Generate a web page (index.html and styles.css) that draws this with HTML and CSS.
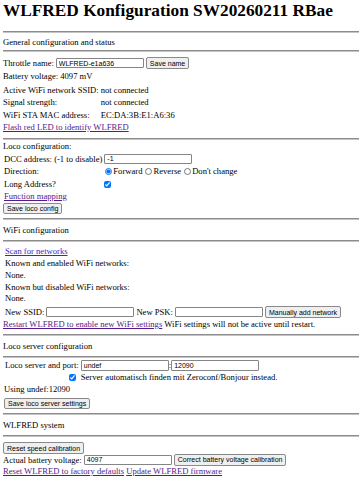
FILE: index.html
```html
<!DOCTYPE html>
<html lang="en">
<head>
    <meta charset="UTF-8">
    <meta name="viewport" content="width=device-width, initial-scale=1.0">
    <title>WLFRED Konfiguration</title>
    <link rel="stylesheet" href="styles.css">
</head>
<body>
    <h1>WLFRED Konfiguration SW20260211 RBae</h1>

    <hr>
    <div class="section-title first">General configuration and status</div>
    <hr>
    <form class="row throttle-row">
        <label for="throttleName">Throttle name:</label>
        <input type="text" id="throttleName" value="WLFRED-e1a636">
        <button type="button">Save name</button>
    </form>
    <div class="line battery-line">Battery voltage: 4097 mV</div>
    <div class="status-grid">
        <span>Active WiFi network SSID:</span><span>not connected</span>
        <span>Signal strength:</span><span>not connected</span>
        <span>WiFi STA MAC address:</span><span>EC:DA:3B:E1:A6:36</span>
    </div>
    <div class="line"><a href="#" class="visited">Flash red LED to identify WLFRED</a></div>

    <hr class="gap-general">
    <div class="line">Loco configuration:</div>
    <div class="loco-grid">
        <label for="dccAddress" class="tall">DCC address: (-1 to disable)</label>
        <div class="tall"><input type="text" id="dccAddress" value="-1"></div>
        <span>Direction:</span>
        <div class="radios">
            <input type="radio" name="dir" id="dirFwd" checked><label for="dirFwd">Forward</label>
            <input type="radio" name="dir" id="dirRev"><label for="dirRev">Reverse</label>
            <input type="radio" name="dir" id="dirKeep"><label for="dirKeep">Don't change</label>
        </div>
        <span>Long Address?</span>
        <div><input type="checkbox" checked></div>
    </div>
    <div class="line indent"><a href="#" class="visited">Function mapping</a></div>
    <button type="button" class="block-btn loco-btn">Save loco config</button>

    <hr class="gap-loco">
    <div class="section-title">WiFi configuration</div>
    <hr>
    <div class="wifi">
        <div class="line-sm"><a href="#" class="fresh">Scan for networks</a></div>
        <div class="line-sm">Known and enabled WiFi networks:</div>
        <div class="line-sm">None.</div>
        <div class="line-sm">Known but disabled WiFi networks:</div>
        <div class="line-sm">None.</div>
        <form class="row ssid-row">
            <label for="newSsid">New SSID:</label>
            <input type="text" id="newSsid">
            <label for="newPsk">New PSK:</label>
            <input type="text" id="newPsk">
            <button type="button">Manually add network</button>
        </form>
    </div>
    <div class="line-sm"><a href="#" class="visited">Restart WLFRED to enable new WiFi settings</a> WiFi settings will not be active until restart.</div>

    <hr class="gap-wifi">
    <div class="section-title">Loco server configuration</div>
    <hr>
    <div class="server-grid">
        <label for="serverHost" class="tall">Loco server and port:</label>
        <div class="tall"><input type="text" id="serverHost" value="undef">:<input type="text" value="12090"></div>
        <div class="check-cell"><input type="checkbox" checked></div>
        <span>Server automatisch finden mit Zeroconf/Bonjour instead.</span>
    </div>
    <div class="line indent">Using undef:12090</div>
    <button type="button" class="block-btn server-btn">Save loco server settings</button>

    <hr class="gap-server">
    <div class="section-title">WLFRED system</div>
    <hr>
    <button type="button" class="block-btn system-btn">Reset speed calibration</button>
    <form class="row">
        <label for="actualVoltage">Actual battery voltage:</label>
        <input type="text" id="actualVoltage" value="4097">
        <button type="button">Correct battery voltage calibration</button>
    </form>
    <div class="line-sm"><a href="#" class="visited">Reset WLFRED to factory defaults</a> <a href="#" class="visited">Update WLFRED firmware</a></div>
</body>
</html>
```

FILE: styles.css
```css
body {
    font-family: "Liberation Serif", "Times New Roman", serif;
    font-size: 8.6px;
    color: #000;
    background: #fff;
    margin: 0;
    padding: 1px 3px 0 3px;
}
h1 {
    font-size: 17.3px;
    line-height: 20px;
    margin: 0 0 10px;
}
hr {
    border: none;
    border-top: 1px solid #8c8c8c;
    border-bottom: 1px solid #c4c4c4;
    margin: 0;
}
hr.gap-general {
    margin-top: 4.7px;
}
hr.gap-loco {
    margin-top: 4px;
}
hr.gap-wifi {
    margin-top: 3.5px;
}
hr.gap-server {
    margin-top: 4px;
}
.section-title {
    line-height: 10px;
    padding: 5px 0 5px;
}
.section-title.first {
    padding: 3.5px 0 3.5px;
}
a {
    text-decoration: underline;
}
a.visited {
    color: #551a8b;
}
a.fresh {
    color: #3b27c4;
}
.line {
    line-height: 12.3px;
}
.line-sm {
    line-height: 11.75px;
}
.indent {
    padding-left: 1px;
}
.row {
    display: flex;
    align-items: center;
    gap: 2px;
    height: 12px;
}
.throttle-row {
    margin-top: 5px;
}
.battery-line {
    margin-top: 1px;
    line-height: 12.5px;
}
input[type="text"] {
    font-family: "Liberation Sans", Arial, sans-serif;
    font-size: 7px;
    width: 88px;
    height: 10.5px;
    box-sizing: border-box;
    border: 1px solid #858585;
    border-radius: 1px;
    padding: 0 2px;
    margin: 0;
}
button {
    font-family: "Liberation Sans", Arial, sans-serif;
    font-size: 7px;
    height: 11.5px;
    padding: 0 3px;
    background: #efefef;
    border: 1px solid #8a8a8a;
    border-radius: 2px;
    color: #000;
    margin: 0;
}
.block-btn {
    display: block;
}
.status-grid {
    display: grid;
    grid-template-columns: auto auto;
    justify-content: start;
    column-gap: 2px;
    line-height: 12.5px;
    margin-top: 1px;
}
.loco-grid {
    display: grid;
    grid-template-columns: auto auto;
    justify-content: start;
    align-items: center;
    column-gap: 2px;
    line-height: 12.3px;
    padding-left: 1px;
}
.loco-grid .tall {
    height: 13px;
    display: flex;
    align-items: center;
}
.radios {
    display: flex;
    align-items: center;
}
.radios input[type="radio"] {
    width: 7px;
    height: 7px;
    margin: 0 1px 0 3px;
    accent-color: #0075ff;
}
.radios input[type="radio"]:first-child {
    margin-left: 1px;
}
input[type="checkbox"] {
    width: 7px;
    height: 7px;
    margin: 0;
    accent-color: #0075ff;
    vertical-align: middle;
}
.loco-btn {
    margin-top: 0.8px;
}
.wifi {
    padding-left: 2px;
    margin-top: 4px;
}
.ssid-row {
    height: 13px;
    margin-top: 0.5px;
}
.server-grid {
    display: grid;
    grid-template-columns: auto auto;
    justify-content: start;
    align-items: center;
    column-gap: 2px;
    line-height: 12px;
    padding-left: 2px;
    margin-top: 1.5px;
}
.server-grid .tall {
    height: 12px;
    display: flex;
    align-items: center;
}
.check-cell {
    justify-self: end;
    display: flex;
    align-items: center;
    height: 12px;
    padding-right: 3px;
}
.server-btn {
    margin: 2px 0 0 1px;
}
.system-btn {
    margin-top: 5px;
}
```
